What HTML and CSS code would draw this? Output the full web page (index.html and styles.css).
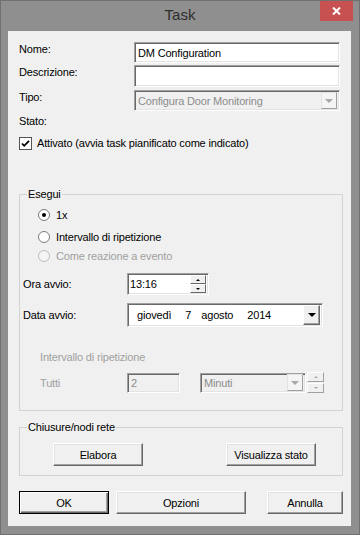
FILE: index.html
```html
<!DOCTYPE html>
<html lang="it">
<head>
    <meta charset="UTF-8">
    <title>Task</title>
    <link rel="stylesheet" href="styles.css">
</head>
<body>
    <div class="window">
        <div class="titlebar">
            <div class="title">Task</div>
            <div class="close">
                <svg width="9" height="8" viewBox="0 0 9 8"><path d="M1 0.5L8 7.5M8 0.5L1 7.5" stroke="#fff" stroke-width="2"/></svg>
            </div>
        </div>

        <div class="client">
            <div class="field">
                <span class="field-label">Nome:</span>
                <div class="textbox h21">DM Configuration</div>
            </div>
            <div class="field gap2">
                <span class="field-label">Descrizione:</span>
                <div class="textbox h22"></div>
            </div>
            <div class="field gap3">
                <span class="field-label">Tipo:</span>
                <div class="combo disabled h21">
                    <span class="combo-text">Configura Door Monitoring</span>
                    <span class="drop small"><i class="tri grey"></i></span>
                </div>
            </div>
            <div class="line stato">Stato:</div>
            <div class="line check-row">
                <span class="checkbox">
                    <svg width="13" height="13" viewBox="0 0 13 13"><rect x="0.5" y="0.5" width="12" height="12" fill="#fff" stroke="#555"/><path d="M3 6.5L5.2 8.8L10 3.8" fill="none" stroke="#000" stroke-width="1.8"/></svg>
                </span>
                Attivato (avvia task pianificato come indicato)
            </div>

            <fieldset class="group esegui">
                <legend>Esegui</legend>
                <div class="radio-row r1">
                    <svg class="radio" width="12" height="12" viewBox="0 0 12 12"><circle cx="6" cy="6" r="5.5" fill="#fff" stroke="#7a7a7a"/><circle cx="6" cy="6" r="2" fill="#000"/></svg>
                    1x
                </div>
                <div class="radio-row r2">
                    <svg class="radio" width="12" height="12" viewBox="0 0 12 12"><circle cx="6" cy="6" r="5.5" fill="#fff" stroke="#7a7a7a"/></svg>
                    Intervallo di ripetizione
                </div>
                <div class="radio-row r3 off">
                    <svg class="radio" width="12" height="12" viewBox="0 0 12 12"><circle cx="6" cy="6" r="5.5" fill="#f4f4f4" stroke="#bdbdbd"/></svg>
                    Come reazione a evento
                </div>

                <div class="param ora">
                    <span class="param-label">Ora avvio:</span>
                    <div class="textbox timebox">
                        <span class="time-text">13:16</span>
                        <span class="spin">
                            <span class="spin-btn"><i class="mini up"></i></span>
                            <span class="spin-btn"><i class="mini down"></i></span>
                        </span>
                    </div>
                </div>
                <div class="param data">
                    <span class="param-label">Data avvio:</span>
                    <div class="textbox datebox">
                        <span class="d-day">giovedì</span>
                        <span class="d-num">7</span>
                        <span class="d-month">agosto</span>
                        <span class="d-year">2014</span>
                        <span class="drop big"><i class="tri"></i></span>
                    </div>
                </div>

                <div class="line sub off">Intervallo di ripetizione</div>
                <div class="param tutti">
                    <span class="param-label off">Tutti</span>
                    <div class="textbox disabled numbox">2</div>
                    <div class="combo disabled minuti">
                        <span class="combo-text">Minuti</span>
                        <span class="drop small"><i class="tri grey"></i></span>
                    </div>
                    <span class="spin standalone">
                        <span class="spin-btn"><i class="mini up grey"></i></span>
                        <span class="spin-btn"><i class="mini down grey"></i></span>
                    </span>
                </div>
            </fieldset>

            <fieldset class="group chiusure">
                <legend>Chiusure/nodi rete</legend>
                <div class="group-buttons">
                    <div class="button">Elabora</div>
                    <div class="button">Visualizza stato</div>
                </div>
            </fieldset>

            <div class="dialog-buttons">
                <div class="button default ok">OK</div>
                <div class="button opzioni">Opzioni</div>
                <div class="button annulla">Annulla</div>
            </div>
        </div>
    </div>
</body>
</html>
```

FILE: styles.css
```css
body {
    margin: 0;
    font-family: "Liberation Sans", Arial, sans-serif;
    font-size: 11px;
    letter-spacing: -0.17px;
    color: #000;
}
.window {
    width: 360px;
    height: 535px;
    box-sizing: border-box;
    border: 1px solid #707070;
    background: #8f8f8f;
    display: flex;
    flex-direction: column;
}
.titlebar {
    height: 30px;
    display: grid;
    grid-template-columns: 1fr auto 1fr;
    align-items: start;
}
.title {
    grid-column: 2;
    font-size: 15px;
    letter-spacing: 0;
    line-height: 28px;
    color: #2e2e2e;
}
.close {
    grid-column: 3;
    justify-self: end;
    width: 33px;
    height: 20px;
    margin-right: 6px;
    background: #c75050;
    display: flex;
    align-items: center;
    justify-content: center;
}
.client {
    flex: 1;
    margin: 0 8px 8px 7px;
    background: #f0f0f0;
    padding: 11px 9px 0 11px;
}

/* campi in alto */
.field {
    display: flex;
}
.field.gap2 { margin-top: 2px; }
.field.gap3 { margin-top: 3px; }
.field-label {
    width: 115px;
    line-height: 14px;
}
.h21 { height: 21px; }
.h22 { height: 22px; }

.textbox, .combo {
    box-sizing: border-box;
    border: 1px solid;
    border-color: #a0a0a0 #fff #fff #a0a0a0;
    box-shadow: inset 1px 1px 0 #696969, inset -1px -1px 0 #e3e3e3;
    background: #fff;
    display: flex;
    align-items: center;
}
.field .textbox, .field .combo {
    width: 206px;
    padding-left: 3px;
}
.disabled {
    background: #f0f0f0;
    color: #8c8c8c;
}
.combo-text {
    flex: 1;
}
.drop {
    box-sizing: border-box;
    display: flex;
    align-items: center;
    justify-content: center;
    background: #f0f0f0;
    border: 1px solid;
    border-color: #fff #696969 #696969 #fff;
    box-shadow: inset -1px -1px 0 #a0a0a0;
}
.drop.small {
    width: 16px;
    height: 17px;
    margin-right: 2px;
    background: #f4f4f4;
    border-color: #e3e3e3 #a0a0a0 #a0a0a0 #e3e3e3;
    box-shadow: none;
}
.drop.big {
    width: 17px;
    height: 20px;
    margin-left: auto;
    margin-right: 2px;
}
.tri {
    width: 0;
    height: 0;
    border-left: 4px solid transparent;
    border-right: 4px solid transparent;
    border-top: 4px solid #000;
}
.tri.grey {
    border-top-color: #a8a8a8;
}

.line {
    line-height: 16px;
}
.stato { margin-top: 2px; }
.check-row {
    margin-top: 6px;
    display: flex;
    align-items: center;
}
.checkbox {
    display: flex;
    margin-right: 5px;
}

/* gruppi */
.group {
    margin: 0 -1px 0 0;
    padding: 0;
    border: 1px solid #d3d3d3;
}
.group legend {
    margin-left: 7px;
    padding: 0 1px;
    line-height: 13px;
}
.esegui {
    margin-top: 37px;
    padding: 0 0 17px;
}
.radio-row {
    display: flex;
    align-items: center;
    line-height: 16px;
    padding-left: 18px;
}
.radio {
    margin-right: 6px;
}
.r1 { margin-top: 6px; }
.r2 { margin-top: 6px; }
.r3 { margin-top: 3px; }
.off {
    color: #a0a0a0;
}

.param {
    display: flex;
    align-items: center;
    padding-left: 3px;
}
.param-label {
    width: 104px;
}
.ora { margin-top: 9px; }
.data { margin-top: 8px; }
.timebox {
    width: 82px;
    height: 22px;
    padding-left: 2px;
}
.time-text {
    flex: 1;
}
.spin {
    display: flex;
    flex-direction: column;
    width: 16px;
    margin-right: 2px;
}
.spin-btn {
    box-sizing: border-box;
    height: 9px;
    display: flex;
    align-items: center;
    justify-content: center;
    background: #f0f0f0;
    border: 1px solid;
    border-color: #fff #696969 #696969 #fff;
}
.mini {
    width: 0;
    height: 0;
    border-left: 2px solid transparent;
    border-right: 2px solid transparent;
}
.mini.up { border-bottom: 2px solid #000; }
.mini.down { border-top: 2px solid #000; }
.mini.up.grey { border-bottom-color: #a8a8a8; }
.mini.down.grey { border-top-color: #a8a8a8; }

.datebox {
    width: 196px;
    height: 24px;
    padding-left: 9px;
}
.d-num { margin-left: 14px; }
.d-month { margin-left: 10px; }
.d-year { margin-left: 14px; }

.sub {
    margin-top: 22px;
    padding-left: 20px;
}
.tutti {
    margin-top: 7px;
    padding-left: 20px;
}
.tutti .param-label {
    width: 87px;
}
.numbox {
    width: 53px;
    height: 20px;
    padding-left: 3px;
}
.minuti {
    width: 106px;
    height: 20px;
    margin-left: 20px;
    padding-left: 3px;
}
.spin.standalone {
    margin-left: 1px;
    width: 17px;
}
.spin.standalone .spin-btn {
    height: 10px;
    border-color: #fff #a0a0a0 #a0a0a0 #fff;
}
.spin.standalone .spin-btn + .spin-btn {
    margin-top: 1px;
}

.chiusure {
    margin-top: 10px;
    padding: 0 0 9px;
}
.group-buttons {
    display: flex;
    margin-top: 9px;
    padding-left: 33px;
    gap: 83px;
}

/* pulsanti */
.button {
    box-sizing: border-box;
    width: 90px;
    height: 23px;
    display: flex;
    align-items: center;
    justify-content: center;
    background: #f0f0f0;
    border: 1px solid;
    border-color: #fff #696969 #696969 #fff;
    box-shadow: inset -1px -1px 0 #a0a0a0, inset 1px 1px 0 #e3e3e3;
}
.button.default {
    border: 1px solid #000;
    box-shadow: inset 1px 1px 0 #fff, inset -1px -1px 0 #696969, inset -2px -2px 0 #a0a0a0;
}
.dialog-buttons {
    display: flex;
    margin-top: 15px;
    margin-right: -1px;
}
.opzioni {
    width: 130px;
    margin-left: 7px;
}
.annulla {
    width: 76px;
    margin-left: auto;
}
```
